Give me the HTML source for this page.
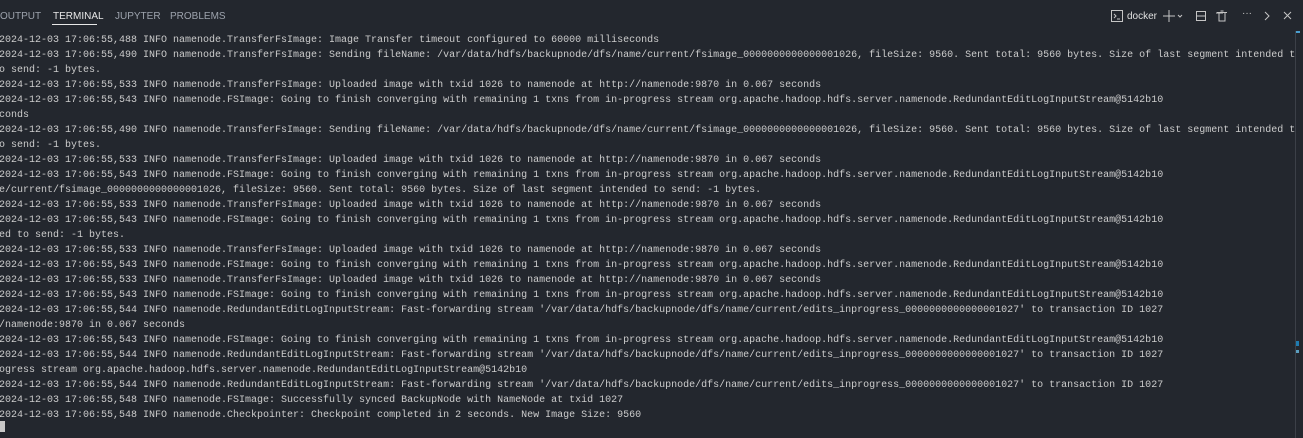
<!DOCTYPE html>
<html><head><meta charset="utf-8"><style>
html,body{margin:0;padding:0;width:1303px;height:438px;background:#23272e;overflow:hidden;font-family:"Liberation Sans",sans-serif}
.tabs{position:absolute;top:0;left:0;height:31px;width:1303px}
.tab{position:absolute;top:11px;font-size:10px;color:#9da3ad;letter-spacing:0}
.tab.act{color:#e7e7e7}
.ul{position:absolute;left:52px;top:24px;width:45px;height:1px;background:#e7e7e7}
pre{position:absolute;left:-1px;top:33px;margin:0;width:1296px;overflow:hidden;font-family:"Liberation Mono",monospace;font-size:10px;line-height:15px;color:#cccccc;white-space:pre}
.sb{position:absolute;left:1295px;top:31px;width:1px;height:407px;background:#3c4048}
.cur{position:absolute;left:0;top:421px;width:5px;height:11px;background:#c8c8c8}
</style></head><body>
<div class="tabs">
<div class="tab" style="left:0">OUTPUT</div>
<div class="tab act" style="left:53px">TERMINAL</div>
<div class="ul"></div>
<div class="tab" style="left:115px">JUPYTER</div>
<div class="tab" style="left:170px">PROBLEMS</div>
<svg style="position:absolute;left:1111px;top:10px" width="12" height="12" viewBox="0 0 12 12"><rect x="0.5" y="0.5" width="11" height="11" fill="none" stroke="#c5c5c5"/><path d="M3 4l2 2-2 2M6 9h3" stroke="#c5c5c5" fill="none"/></svg>
<div class="tab" style="left:1127px;color:#e0e0e0">docker</div>
<svg style="position:absolute;left:1163px;top:10px" width="60" height="12" viewBox="0 0 60 12"><path d="M6 0v12M0 6h12" stroke="#c5c5c5"/><path d="M15 5l2 2 2-2" stroke="#c5c5c5" fill="none"/><rect x="33.5" y="1.5" width="9" height="9" fill="none" stroke="#c5c5c5"/><path d="M33 6h10" stroke="#c5c5c5"/><path d="M53 3h9" stroke="#c5c5c5" fill="none"/></svg>
<svg style="position:absolute;left:1216px;top:10px" width="12" height="12" viewBox="0 0 12 12"><path d="M1 2.5h10M3 3v8h6V3M4.5 1h3" stroke="#c5c5c5" fill="none"/></svg>
<div class="tab" style="left:1242px;top:8px;color:#c5c5c5">···</div>
<svg style="position:absolute;left:1263px;top:11px" width="40" height="10" viewBox="0 0 40 10"><path d="M2 1l4 4-4 4" stroke="#c5c5c5" fill="none"/><path d="M21 1l7 7M28 1l-7 7" stroke="#c5c5c5"/></svg>
</div>
<pre>2024-12-03 17:06:55,488 INFO namenode.TransferFsImage: Image Transfer timeout configured to 60000 milliseconds
2024-12-03 17:06:55,490 INFO namenode.TransferFsImage: Sending fileName: /var/data/hdfs/backupnode/dfs/name/current/fsimage_0000000000000001026, fileSize: 9560. Sent total: 9560 bytes. Size of last segment intended to
o send: -1 bytes.
2024-12-03 17:06:55,533 INFO namenode.TransferFsImage: Uploaded image with txid 1026 to namenode at http://namenode:9870 in 0.067 seconds
2024-12-03 17:06:55,543 INFO namenode.FSImage: Going to finish converging with remaining 1 txns from in-progress stream org.apache.hadoop.hdfs.server.namenode.RedundantEditLogInputStream@5142b10
conds
2024-12-03 17:06:55,490 INFO namenode.TransferFsImage: Sending fileName: /var/data/hdfs/backupnode/dfs/name/current/fsimage_0000000000000001026, fileSize: 9560. Sent total: 9560 bytes. Size of last segment intended to
o send: -1 bytes.
2024-12-03 17:06:55,533 INFO namenode.TransferFsImage: Uploaded image with txid 1026 to namenode at http://namenode:9870 in 0.067 seconds
2024-12-03 17:06:55,543 INFO namenode.FSImage: Going to finish converging with remaining 1 txns from in-progress stream org.apache.hadoop.hdfs.server.namenode.RedundantEditLogInputStream@5142b10
e/current/fsimage_0000000000000001026, fileSize: 9560. Sent total: 9560 bytes. Size of last segment intended to send: -1 bytes.
2024-12-03 17:06:55,533 INFO namenode.TransferFsImage: Uploaded image with txid 1026 to namenode at http://namenode:9870 in 0.067 seconds
2024-12-03 17:06:55,543 INFO namenode.FSImage: Going to finish converging with remaining 1 txns from in-progress stream org.apache.hadoop.hdfs.server.namenode.RedundantEditLogInputStream@5142b10
ed to send: -1 bytes.
2024-12-03 17:06:55,533 INFO namenode.TransferFsImage: Uploaded image with txid 1026 to namenode at http://namenode:9870 in 0.067 seconds
2024-12-03 17:06:55,543 INFO namenode.FSImage: Going to finish converging with remaining 1 txns from in-progress stream org.apache.hadoop.hdfs.server.namenode.RedundantEditLogInputStream@5142b10
2024-12-03 17:06:55,533 INFO namenode.TransferFsImage: Uploaded image with txid 1026 to namenode at http://namenode:9870 in 0.067 seconds
2024-12-03 17:06:55,543 INFO namenode.FSImage: Going to finish converging with remaining 1 txns from in-progress stream org.apache.hadoop.hdfs.server.namenode.RedundantEditLogInputStream@5142b10
2024-12-03 17:06:55,544 INFO namenode.RedundantEditLogInputStream: Fast-forwarding stream '/var/data/hdfs/backupnode/dfs/name/current/edits_inprogress_0000000000000001027' to transaction ID 1027
/namenode:9870 in 0.067 seconds
2024-12-03 17:06:55,543 INFO namenode.FSImage: Going to finish converging with remaining 1 txns from in-progress stream org.apache.hadoop.hdfs.server.namenode.RedundantEditLogInputStream@5142b10
2024-12-03 17:06:55,544 INFO namenode.RedundantEditLogInputStream: Fast-forwarding stream '/var/data/hdfs/backupnode/dfs/name/current/edits_inprogress_0000000000000001027' to transaction ID 1027
ogress stream org.apache.hadoop.hdfs.server.namenode.RedundantEditLogInputStream@5142b10
2024-12-03 17:06:55,544 INFO namenode.RedundantEditLogInputStream: Fast-forwarding stream '/var/data/hdfs/backupnode/dfs/name/current/edits_inprogress_0000000000000001027' to transaction ID 1027
2024-12-03 17:06:55,548 INFO namenode.FSImage: Successfully synced BackupNode with NameNode at txid 1027
2024-12-03 17:06:55,548 INFO namenode.Checkpointer: Checkpoint completed in 2 seconds. New Image Size: 9560</pre>
<div class="sb"></div>
<div style="position:absolute;left:1296px;top:31px;width:4px;height:2px;background:#4a9fd0"></div>
<div style="position:absolute;left:1296px;top:341px;width:3px;height:5px;background:#1f7bb0"></div>
<div style="position:absolute;left:1296px;top:350px;width:3px;height:3px;background:#5b9fc0"></div>
<div class="cur"></div>
</body></html>
